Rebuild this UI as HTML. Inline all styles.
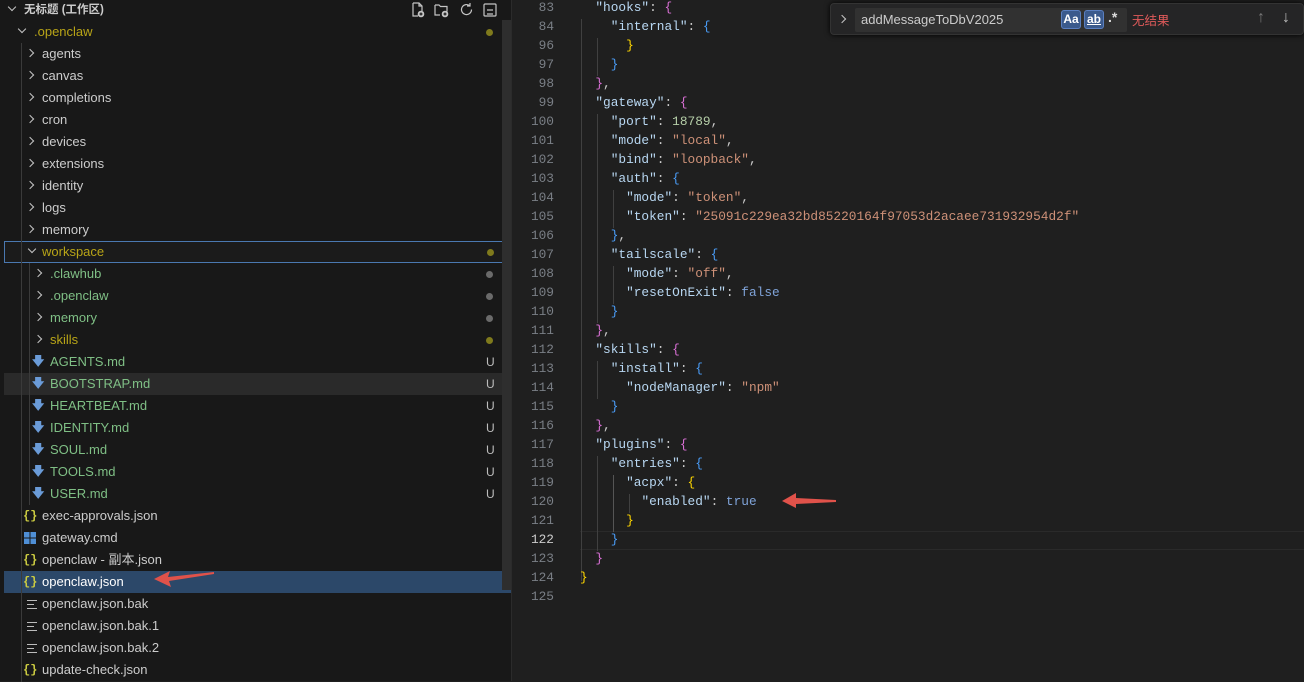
<!DOCTYPE html>
<html><head><meta charset="utf-8"><style>
*{margin:0;padding:0;box-sizing:border-box}
body{width:1304px;height:681px;background:#1f1f1f;overflow:hidden;position:relative;font-family:"Liberation Sans","Noto Sans CJK SC",sans-serif}
#side{position:absolute;left:0;top:0;width:512px;height:681px;background:#181818;border-right:1px solid #2b2b2b}
.r{position:absolute;left:0;width:502px;height:22px;font-size:13px;color:#cccccc;line-height:22px;white-space:nowrap}
.r span.t{position:absolute}
.chev{position:absolute;top:7px;width:6px;height:6px;border-right:1.3px solid #c5c5c5;border-bottom:1.3px solid #c5c5c5}
.cr{transform:rotate(-45deg)}
.cd{transform:rotate(45deg);top:5px}
.dot{position:absolute;left:486px;top:8px;width:7px;height:7px;border-radius:50%}
.U{position:absolute;left:486px;color:#bdbdbd;font-size:12px}
.y{color:#b8a417}.g{color:#7fbf85}
.ic{position:absolute;font-family:"Liberation Mono",monospace;font-size:12px;font-weight:bold;color:#cbcb41}
.guide{position:absolute;width:1px;background:#3a3a3a}
#code{position:absolute;left:512px;top:0;width:792px;height:681px;background:#1f1f1f}
.ln{position:absolute;left:0;width:42px;text-align:right;font-family:"Liberation Mono",monospace;font-size:12.8px;color:#7a7f86;line-height:19px}
.cl{position:absolute;left:68px;font-family:"Liberation Mono",monospace;font-size:12.8px;color:#cccccc;line-height:19px;white-space:pre}
.k{color:#b8d7f2}.s{color:#ce9178}.n{color:#b5cea8}.b{color:#7fa3d8}
.p1{color:#ffd700}.p2{color:#da70d6}.p3{color:#4a9df8}
.ig{position:absolute;width:1px;background:#404040}
.lines3{position:absolute;left:27px;top:7px;width:10px;height:9px;border-top:1.5px solid #bbb;border-bottom:1.5px solid #bbb}
.lines3:after{content:"";position:absolute;left:0;top:2.5px;width:7px;border-top:1.5px solid #bbb}
</style></head><body>
<div id="side">
<div class="r" style="top:0;height:20px;line-height:20px;font-weight:bold;font-size:11.5px"><div class="chev cd" style="left:9px;top:4px"></div><span class="t" style="left:24px">无标题 (工作区)</span>
<svg style="position:absolute;left:410px;top:2px" width="90" height="16" fill="none" stroke="#c5c5c5" stroke-width="1.2"><path d="M3 1h6l3 3v5M3 1v13h5M9 1v3h3"/><circle cx="11" cy="12" r="3.3" fill="#c5c5c5" stroke="none"/><path d="M9.5 12h3M11 10.5v3" stroke="#181818"/><path d="M25 3h4l1.5 1.5H37v5M25 3v10h5"/><circle cx="35" cy="12" r="3.3" fill="#c5c5c5" stroke="none"/><path d="M33.5 12h3M35 10.5v3" stroke="#181818"/><path d="M60 4a5 5 0 1 0 1.5 3.5M60 1v3h-3"/><rect x="74" y="2" width="12" height="12" rx="1"/><path d="M77 8h6M77 12h6"/></svg></div>
<div style="position:absolute;left:0;top:1px;width:512px;height:680px">
<div class="r" style="top:20px"><div class="chev cd" style="left:19px"></div><span class="t y" style="left:34px">.openclaw</span><div class="dot" style="background:#7f7a1c"></div></div>
<div class="r" style="top:42px"><div class="chev cr" style="left:27px"></div><span class="t" style="left:42px">agents</span></div>
<div class="r" style="top:64px"><div class="chev cr" style="left:27px"></div><span class="t" style="left:42px">canvas</span></div>
<div class="r" style="top:86px"><div class="chev cr" style="left:27px"></div><span class="t" style="left:42px">completions</span></div>
<div class="r" style="top:108px"><div class="chev cr" style="left:27px"></div><span class="t" style="left:42px">cron</span></div>
<div class="r" style="top:130px"><div class="chev cr" style="left:27px"></div><span class="t" style="left:42px">devices</span></div>
<div class="r" style="top:152px"><div class="chev cr" style="left:27px"></div><span class="t" style="left:42px">extensions</span></div>
<div class="r" style="top:174px"><div class="chev cr" style="left:27px"></div><span class="t" style="left:42px">identity</span></div>
<div class="r" style="top:196px"><div class="chev cr" style="left:27px"></div><span class="t" style="left:42px">logs</span></div>
<div class="r" style="top:218px"><div class="chev cr" style="left:27px"></div><span class="t" style="left:42px">memory</span></div>
<div class="r" style="top:240px;left:4px;width:507px;border:1px solid #4a78b0;background:#1b1b1b"><div class="chev cd" style="left:24px;top:4px"></div><span class="t y" style="left:37px;top:-1px">workspace</span><div class="dot" style="left:482px;top:7px;background:#7f7a1c"></div></div>
<div class="r" style="top:262px"><div class="chev cr" style="left:35px"></div><span class="t g" style="left:50px">.clawhub</span><div class="dot" style="background:#6a6a6a"></div></div>
<div class="r" style="top:284px"><div class="chev cr" style="left:35px"></div><span class="t g" style="left:50px">.openclaw</span><div class="dot" style="background:#6a6a6a"></div></div>
<div class="r" style="top:306px"><div class="chev cr" style="left:35px"></div><span class="t g" style="left:50px">memory</span><div class="dot" style="background:#6a6a6a"></div></div>
<div class="r" style="top:328px"><div class="chev cr" style="left:35px"></div><span class="t y" style="left:50px">skills</span><div class="dot" style="background:#7f7a1c"></div></div>
<div class="r" style="top:350px"><span class="ic" style="left:32px;color:#6a9bd8">🡇</span><span class="t g" style="left:50px">AGENTS.md</span><span class="U">U</span></div>
<div class="r" style="top:372px;left:4px;width:507px;background:#2a2a2a"><span class="ic" style="left:28px;color:#6a9bd8">🡇</span><span class="t g" style="left:46px">BOOTSTRAP.md</span><span class="U" style="left:482px">U</span></div>
<div class="r" style="top:394px"><span class="ic" style="left:32px;color:#6a9bd8">🡇</span><span class="t g" style="left:50px">HEARTBEAT.md</span><span class="U">U</span></div>
<div class="r" style="top:416px"><span class="ic" style="left:32px;color:#6a9bd8">🡇</span><span class="t g" style="left:50px">IDENTITY.md</span><span class="U">U</span></div>
<div class="r" style="top:438px"><span class="ic" style="left:32px;color:#6a9bd8">🡇</span><span class="t g" style="left:50px">SOUL.md</span><span class="U">U</span></div>
<div class="r" style="top:460px"><span class="ic" style="left:32px;color:#6a9bd8">🡇</span><span class="t g" style="left:50px">TOOLS.md</span><span class="U">U</span></div>
<div class="r" style="top:482px"><span class="ic" style="left:32px;color:#6a9bd8">🡇</span><span class="t g" style="left:50px">USER.md</span><span class="U">U</span></div>
<div class="r" style="top:504px"><span class="ic" style="left:23px">{}</span><span class="t" style="left:42px">exec-approvals.json</span></div>
<div class="r" style="top:526px"><svg style="position:absolute;left:24px;top:5px" width="12" height="12"><rect x="0" y="0" width="5.5" height="5.5" fill="#4f8fd6"/><rect x="6.5" y="0" width="5.5" height="5.5" fill="#4f8fd6"/><rect x="0" y="6.5" width="5.5" height="5.5" fill="#4f8fd6"/><rect x="6.5" y="6.5" width="5.5" height="5.5" fill="#4f8fd6"/></svg><span class="t" style="left:42px">gateway.cmd</span></div>
<div class="r" style="top:548px"><span class="ic" style="left:23px">{}</span><span class="t" style="left:42px">openclaw - 副本.json</span></div>
<div class="r" style="top:570px;left:4px;width:507px;background:#2c4869"><span class="ic" style="left:19px">{}</span><span class="t" style="left:38px;color:#fff">openclaw.json</span></div>
<div class="r" style="top:592px"><div class="lines3"></div><span class="t" style="left:42px">openclaw.json.bak</span></div>
<div class="r" style="top:614px"><div class="lines3"></div><span class="t" style="left:42px">openclaw.json.bak.1</span></div>
<div class="r" style="top:636px"><div class="lines3"></div><span class="t" style="left:42px">openclaw.json.bak.2</span></div>
<div class="r" style="top:658px"><span class="ic" style="left:23px">{}</span><span class="t" style="left:42px">update-check.json</span></div>
<div class="guide" style="left:21px;top:42px;height:639px"></div>
<div class="guide" style="left:29px;top:262px;height:242px"></div>
<svg style="position:absolute;left:150px;top:566px" width="70" height="22"><path d="M4 12 L20 4 L18 10 L64 5 L64 7 L19 14 L21 20 Z" fill="#e0524a"/></svg>
</div>
<div style="position:absolute;left:502px;top:20px;width:9px;height:570px;background:#2e2e2e"></div>
</div>
<div id="code">
<div style="position:absolute;left:68px;top:531px;width:724px;height:19px;border-top:1px solid #2a2a2a;border-bottom:1px solid #2a2a2a"></div>
<div class="ig" style="left:69px;top:19px;height:562px"></div>
<div class="ig" style="left:85px;top:38px;height:38px"></div>
<div class="ig" style="left:85px;top:114px;height:209px"></div>
<div class="ig" style="left:101px;top:190px;height:38px"></div>
<div class="ig" style="left:101px;top:266px;height:38px"></div>
<div class="ig" style="left:85px;top:361px;height:38px"></div>
<div class="ig" style="left:85px;top:456px;height:95px"></div>
<div class="ig" style="left:101px;top:475px;height:57px;background:#555"></div>
<div class="ig" style="left:117px;top:494px;height:19px"></div>
<div id="lines"></div>
<svg style="position:absolute;left:268px;top:490px" width="60" height="20"><path d="M2 11 L16 3 L16 8 L56 10 L56 12 L16 14 L16 18 Z" fill="#e0524a"/></svg>
<div style="position:absolute;left:318px;top:3px;width:474px;height:32px;background:#252526;border-radius:4px;box-shadow:0 0 6px #000;border:1px solid #333">
<div class="chev cr" style="left:8px;top:12px"></div>
<div style="position:absolute;left:24px;top:4px;width:272px;height:24px;background:#313131;border-radius:2px;font-size:13px;color:#ccc;line-height:24px;padding-left:6px">addMessageToDbV2025</div>
<div style="position:absolute;left:230px;top:6px;width:20px;height:19px;background:#3b5a8c;border:1px solid #5a7fc0;border-radius:3px;color:#fff;font-size:12px;text-align:center;line-height:17px;font-weight:bold">Aa</div>
<div style="position:absolute;left:253px;top:6px;width:20px;height:19px;background:#3b5a8c;border:1px solid #5a7fc0;border-radius:3px;color:#fff;font-size:12px;text-align:center;line-height:17px;font-weight:bold;text-decoration:underline">ab</div>
<div style="position:absolute;left:277px;top:5px;color:#ddd;font-size:14px;font-weight:bold">.*</div>
<div style="position:absolute;left:301px;top:6px;color:#e05a5a;font-size:12.5px">无结果</div>
<div style="position:absolute;left:426px;top:5px;color:#777;font-size:16px">↑</div>
<div style="position:absolute;left:451px;top:5px;color:#bbb;font-size:16px">↓</div>
</div>
</div>
<script>
var L=[
[83,'  <span class="k">"hooks"</span>: <span class="p2">{</span>'],
[84,'    <span class="k">"internal"</span>: <span class="p3">{</span>'],
[96,'      <span class="p1">}</span>'],
[97,'    <span class="p3">}</span>'],
[98,'  <span class="p2">}</span>,'],
[99,'  <span class="k">"gateway"</span>: <span class="p2">{</span>'],
[100,'    <span class="k">"port"</span>: <span class="n">18789</span>,'],
[101,'    <span class="k">"mode"</span>: <span class="s">"local"</span>,'],
[102,'    <span class="k">"bind"</span>: <span class="s">"loopback"</span>,'],
[103,'    <span class="k">"auth"</span>: <span class="p3">{</span>'],
[104,'      <span class="k">"mode"</span>: <span class="s">"token"</span>,'],
[105,'      <span class="k">"token"</span>: <span class="s">"25091c229ea32bd85220164f97053d2acaee731932954d2f"</span>'],
[106,'    <span class="p3">}</span>,'],
[107,'    <span class="k">"tailscale"</span>: <span class="p3">{</span>'],
[108,'      <span class="k">"mode"</span>: <span class="s">"off"</span>,'],
[109,'      <span class="k">"resetOnExit"</span>: <span class="b">false</span>'],
[110,'    <span class="p3">}</span>'],
[111,'  <span class="p2">}</span>,'],
[112,'  <span class="k">"skills"</span>: <span class="p2">{</span>'],
[113,'    <span class="k">"install"</span>: <span class="p3">{</span>'],
[114,'      <span class="k">"nodeManager"</span>: <span class="s">"npm"</span>'],
[115,'    <span class="p3">}</span>'],
[116,'  <span class="p2">}</span>,'],
[117,'  <span class="k">"plugins"</span>: <span class="p2">{</span>'],
[118,'    <span class="k">"entries"</span>: <span class="p3">{</span>'],
[119,'      <span class="k">"acpx"</span>: <span class="p1">{</span>'],
[120,'        <span class="k">"enabled"</span>: <span class="b">true</span>'],
[121,'      <span class="p1">}</span>'],
[122,'    <span class="p3">}</span>'],
[123,'  <span class="p2">}</span>'],
[124,'<span class="p1">}</span>'],
[125,'']];
var h='';L.forEach(function(l,i){var t=i*19-2;h+='<div class="ln" style="top:'+t+'px'+(l[0]==122?';color:#ccc':'')+'">'+l[0]+'</div><div class="cl" style="top:'+t+'px">'+l[1]+'</div>';});
document.getElementById('lines').innerHTML=h;
</script>
</body></html>
